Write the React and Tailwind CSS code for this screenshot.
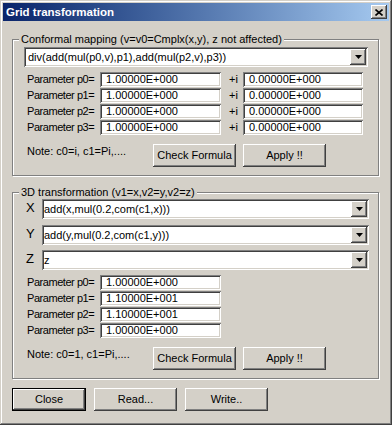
import React from 'react'

const raised =
  'shadow-[inset_-1px_-1px_0_#404040,inset_1px_1px_0_#ffffff,inset_-2px_-2px_0_#808080,inset_2px_2px_0_#d4d0c8]'
const sunken =
  'shadow-[inset_1px_1px_0_#808080,inset_-1px_-1px_0_#ffffff,inset_2px_2px_0_#404040,inset_-2px_-2px_0_#d4d0c8]'
const etched = 'border border-[#808080] shadow-[inset_1px_1px_0_#ffffff,1px_1px_0_#ffffff]'

const Field = ({ value, w = 'w-[121px]' }) => (
  <div className={`${sunken} ${w} shrink-0 h-[15px] bg-white pl-[6px] flex items-center leading-[13px] whitespace-nowrap`}>
    {value}
  </div>
)

const Arrow = () => (
  <svg width="7" height="4" viewBox="0 0 7 4">
    <polygon points="0,0 7,0 3.5,4" fill="#000" />
  </svg>
)

const Combo = ({ value, w, pad = 'pl-[4px]' }) => (
  <div className={`${sunken} ${w} shrink-0 h-[20px] bg-white flex items-center`}>
    <span className={`flex-1 ${pad} leading-[14px] whitespace-nowrap overflow-hidden`}>{value}</span>
    <div className={`${raised} w-[16px] h-[16px] mr-[2px] bg-[#d4d0c8] flex items-center justify-center`}>
      <Arrow />
    </div>
  </div>
)

const Button = ({ children, w = 'w-[83px]', def = false }) => (
  <div
    className={`${
      def
        ? 'shadow-[inset_0_0_0_1px_#000000,inset_-2px_-2px_0_#404040,inset_2px_2px_0_#ffffff,inset_-3px_-3px_0_#808080]'
        : raised
    } ${w} shrink-0 h-[23px] bg-[#d4d0c8] flex items-center justify-center whitespace-nowrap`}
  >
    {children}
  </div>
)

const Legend = ({ children }) => (
  <span className="-mt-[7px] ml-[6px] px-[2px] self-start bg-[#d4d0c8] leading-[13px] whitespace-nowrap">
    {children}
  </span>
)

const Label = ({ children }) => (
  <span className="w-[73px] shrink-0 leading-[13px] whitespace-nowrap tracking-[-0.45px]">{children}</span>
)

const NoteRow = ({ note, top }) => (
  <div className={`flex ml-[14px] ${top}`}>
    <span className="w-[126px] shrink-0 mt-[1px] leading-[13px] whitespace-nowrap">{note}</span>
    <div className="flex gap-[7px]">
      <Button>Check Formula</Button>
      <Button>Apply !!</Button>
    </div>
  </div>
)

export default function App() {
  const complexRows = ['p0', 'p1', 'p2', 'p3']
  const realRows = [
    ['p0', '1.00000E+000'],
    ['p1', '1.10000E+001'],
    ['p2', '1.10000E+001'],
    ['p3', '1.00000E+000'],
  ]
  const axes = [
    ['X', 'add(x,mul(0.2,com(c1,x)))', ''],
    ['Y', 'add(y,mul(0.2,com(c1,y)))', 'mt-[6px]'],
    ['Z', 'z', 'mt-[5px]'],
  ]

  return (
    <div className="w-[392px] h-[425px] p-[3px] bg-[#d4d0c8] text-black text-[11px] font-['Liberation_Sans',Arial,sans-serif] shadow-[inset_-1px_-1px_0_#404040,inset_1px_1px_0_#d4d0c8,inset_-2px_-2px_0_#808080,inset_2px_2px_0_#ffffff] flex flex-col">
      {/* title bar */}
      <div className="h-[18px] bg-linear-to-r from-[#0a246a] to-[#a6caf0] flex items-center justify-between pl-[3px] pr-[2px]">
        <span className="text-white font-bold text-[11.5px] leading-[14px]">Grid transformation</span>
        <div className={`${raised} w-[16px] h-[14px] bg-[#d4d0c8] flex items-center justify-center`}>
          <svg width="8" height="7" viewBox="0 0 8 7">
            <path d="M0.5 0.5 L7.5 6.5 M7.5 0.5 L0.5 6.5" stroke="#000" strokeWidth="1.6" />
          </svg>
        </div>
      </div>

      {/* conformal mapping */}
      <div className={`${etched} ml-[9px] mt-[18px] w-[367px] h-[137px] flex flex-col`}>
        <Legend>Conformal mapping (v=v0=Cmplx(x,y), z not affected)</Legend>
        <div className="ml-[11px] mt-[1px]">
          <Combo w="w-[344px]" value="div(add(mul(p0,v),p1),add(mul(p2,v),p3))" />
        </div>
        <div className="flex flex-col gap-[1px] mt-[5px] ml-[14px]">
          {complexRows.map((p) => (
            <div key={p} className="flex h-[15px] items-center">
              <Label>Parameter {p}=</Label>
              <Field value="1.00000E+000" />
              <span className="w-[22px] shrink-0 pl-[8px] leading-[13px]">+i</span>
              <Field value="0.00000E+000" w="w-[120px]" />
            </div>
          ))}
        </div>
        <NoteRow note="Note: c0=i, c1=Pi,...." top="mt-[9px]" />
      </div>

      {/* 3D transformation */}
      <div className={`${etched} ml-[9px] mt-[16px] w-[367px] h-[187px] flex flex-col`}>
        <Legend>3D transformation (v1=x,v2=y,v2=z)</Legend>
        {axes.map(([a, v, m]) => (
          <div key={a} className={`flex items-center ml-[13px] ${m}`}>
            <span className="w-[16px] shrink-0 text-[13px] leading-[14px] -mt-[2px]">{a}</span>
            <Combo w="w-[327px]" value={v} pad="pl-[2px]" />
          </div>
        ))}
        <div className="flex flex-col gap-[1px] mt-[5px] ml-[14px]">
          {realRows.map(([p, v]) => (
            <div key={p} className="flex h-[15px] items-center">
              <Label>Parameter {p}=</Label>
              <Field value={v} />
            </div>
          ))}
        </div>
        <NoteRow note="Note: c0=1, c1=Pi,...." top="mt-[9px]" />
      </div>

      {/* bottom buttons */}
      <div className="flex gap-[8px] ml-[9px] mt-[9px]">
        <Button w="w-[74px]" def>
          Close
        </Button>
        <Button>Read...</Button>
        <Button>Write..</Button>
      </div>
    </div>
  )
}
